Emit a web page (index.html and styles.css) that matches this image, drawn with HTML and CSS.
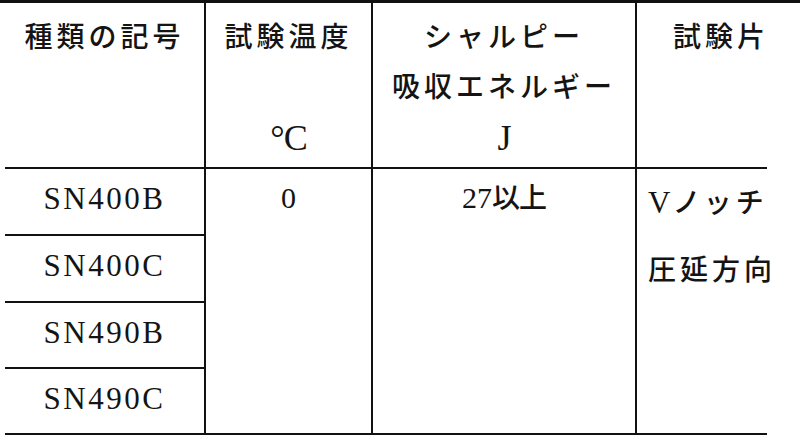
FILE: index.html
```html
<!DOCTYPE html>
<html lang="ja">
<head>
<meta charset="utf-8">
<title>衝撃試験</title>
<link rel="stylesheet" href="styles.css">
</head>
<body>
<div class="sheet">
  <table class="spec">
    <colgroup>
      <col class="c-grade">
      <col class="c-temp">
      <col class="c-energy">
      <col class="c-piece">
    </colgroup>
    <thead>
      <tr class="head-row">
        <th class="h-grade">種類の記号</th>
        <th class="h-temp">試験温度<br><br><span class="unit">°C</span></th>
        <th class="h-energy">シャルピー<br>吸収エネルギー<br><span class="unit">J</span></th>
        <th class="h-piece">試験片</th>
      </tr>
    </thead>
    <tbody>
      <tr class="row-a">
        <td class="grade">SN400B</td>
        <td class="val" rowspan="4">0</td>
        <td class="val" rowspan="4">27<span class="jp">以上</span></td>
        <td class="piece" rowspan="4"><span class="latin">V</span>ノッチ<br>圧延方向</td>
      </tr>
      <tr class="row-a"><td class="grade">SN400C</td></tr>
      <tr class="row-b"><td class="grade">SN490B</td></tr>
      <tr class="row-b"><td class="grade">SN490C</td></tr>
    </tbody>
  </table>
</div>
</body>
</html>
```

FILE: styles.css
```css
html, body {
  margin: 0;
  padding: 0;
  background: #ffffff;
}

.sheet {
  border-top: 3px solid #111111;
  padding-left: 5px;
  width: 795px;
}

.spec {
  border-collapse: collapse;
  table-layout: fixed;
  width: 762px;
  font-family: "Liberation Serif", "Noto Sans CJK JP", serif;
  color: #141414;
}

.c-grade { width: 200px; }
.c-temp { width: 167px; }
.c-energy { width: 264px; }
.c-piece { width: 131px; }

.spec th,
.spec td {
  padding: 0;
  border: 2px solid #111111;
  border-top: none;
}

.spec th:first-child,
.spec td.grade {
  border-left: none;
}

.spec th:last-child,
.spec td.piece {
  border-right: none;
}

.head-row { height: 165px; }
.row-a { height: 67px; }
.row-b { height: 66px; }

.spec th {
  font-weight: 500;
  font-size: 28px;
  letter-spacing: 4px;
  line-height: 50px;
  vertical-align: top;
  text-align: center;
  padding-top: 10px;
  white-space: nowrap;
}

.spec th .unit {
  font-weight: 400;
  font-size: 36px;
  letter-spacing: -1px;
}

.spec th.h-piece {
  text-align: left;
  padding-left: 36px;
}

.spec td.grade {
  font-size: 31px;
  letter-spacing: 2.5px;
  text-align: center;
  vertical-align: middle;
  padding-bottom: 5px;
}

.spec td.val {
  font-size: 30px;
  letter-spacing: 0;
  text-align: center;
  vertical-align: top;
  line-height: 58px;
}

.val .jp {
  font-size: 28px;
  font-weight: 500;
  letter-spacing: -1px;
}

.spec td.piece {
  font-size: 28px;
  font-weight: 500;
  letter-spacing: 4px;
  text-align: left;
  vertical-align: top;
  line-height: 67px;
  padding-left: 11px;
  white-space: nowrap;
}

.piece .latin {
  font-size: 31px;
  font-weight: 400;
  letter-spacing: 2px;
}
```
